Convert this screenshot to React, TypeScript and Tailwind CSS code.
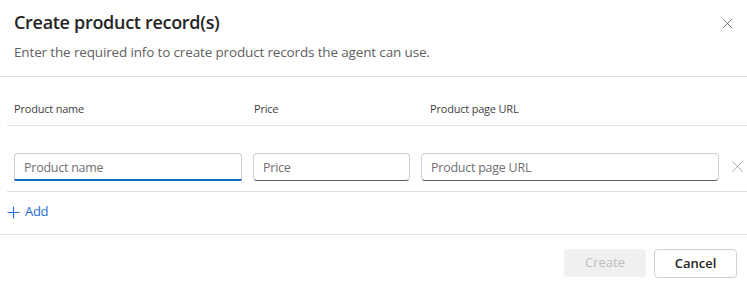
import { Plus, X } from "lucide-react";

const font = { fontFamily: '"Open Sans", "Noto Sans", Arial, sans-serif' };

function Field({ placeholder, width, focused }: { placeholder: string; width: string; focused?: boolean }) {
  return (
    <div
      className={`relative h-[28px] rounded-[4px] border border-[#d1d1d1] ${
        focused ? "border-b-[#0f6cbd]" : "border-b-[#616161]"
      } ${width} bg-white`}
    >
      <input
        placeholder={placeholder}
        className="h-full w-full bg-transparent px-[9px] text-[12.5px] tracking-[-0.25px] text-[#242424] outline-none placeholder:text-[#707070]"
      />
      {focused && <div className="absolute -bottom-px -left-px -right-px h-[2px] rounded-b-[4px] bg-[#0f6cbd]" />}
    </div>
  );
}

export default function App() {
  return (
    <div className="h-[284px] w-[747px] overflow-hidden bg-white text-[#242424]" style={font}>
      <div className="flex items-start justify-between pl-[14px] pr-[11px] pt-[8px]">
        <div>
          <h1 className="text-[18px] font-semibold leading-[28px] tracking-[-0.3px]">Create product record(s)</h1>
          <p className="mt-[6px] text-[13.5px] leading-[20px] tracking-[-0.15px] text-[#616161]">
            Enter the required info to create product records the agent can use.
          </p>
        </div>
        <button className="mt-[7px] text-[#616161]">
          <X size={17} strokeWidth={1.2} />
        </button>
      </div>

      <div className="mt-[14px] border-t border-[#e0e0e0]" />

      <div className="pl-[7px]">
        <div className="grid h-[49px] grid-cols-[240px_168px_1fr] items-end border-b border-[#e0e0e0] pb-[8px] text-[11px] font-medium tracking-[-0.2px] text-[#424242]">
          <div className="pl-[7px]">Product name</div>
          <div className="pl-[7px]">Price</div>
          <div className="pl-[15px]">Product page URL</div>
        </div>

        <div className="flex h-[66px] items-start border-b border-[#e0e0e0] pt-[27px]">
          <div className="w-[240px] pl-[7px]">
            <Field placeholder="Product name" width="w-[228px]" focused />
          </div>
          <div className="w-[168px] pl-[6px]">
            <Field placeholder="Price" width="w-[157px]" />
          </div>
          <div className="pl-[6px]">
            <Field placeholder="Product page URL" width="w-[298px]" />
          </div>
          <button className="ml-[9px] mt-[4px] text-[#9a9a9a]">
            <X size={19} strokeWidth={1} />
          </button>
        </div>

        <button className="-ml-[3px] flex h-[42px] items-center gap-[2px] pb-[2px] text-[13px] tracking-[-0.3px] text-[#1f6bd6]">
          <Plus size={19} strokeWidth={1.4} />
          Add
        </button>
      </div>

      <div className="border-t border-[#e0e0e0]" />

      <div className="flex justify-end gap-[8px] pr-[10px] pt-[14px]">
        <button className="h-[28px] w-[82px] rounded-[4px] bg-[#f0f0f0] text-[13px] font-medium text-[#bdbdbd]">
          Create
        </button>
        <button className="h-[29px] w-[83px] rounded-[4px] border border-[#d1d1d1] bg-white text-[13px] font-semibold text-[#242424]">
          Cancel
        </button>
      </div>
    </div>
  );
}
